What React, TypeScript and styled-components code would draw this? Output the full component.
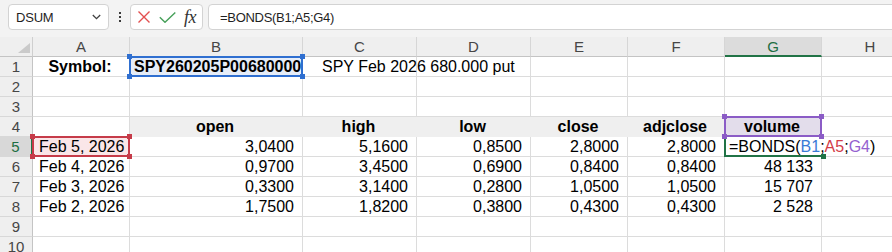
import React from "react";
import styled, { createGlobalStyle } from "styled-components";

const GlobalStyle = createGlobalStyle`
  html, body { margin: 0; padding: 0; background: #fff; }
  body { font-family: "Liberation Sans", Arial, sans-serif; overflow: hidden; }
  * { box-sizing: border-box; }
`;

const Window = styled.div`
  width: 892px;
  height: 252px;
  overflow: hidden;
  background: #fff;
`;

const Toolbar = styled.div`
  display: flex;
  align-items: flex-start;
  height: 37px;
  padding: 4px 0 0 8px;
  background: #f3f3f3;
`;

const Box = styled.div`
  height: 26px;
  background: #fff;
  border: 1px solid #d3d3d3;
  border-radius: 4px;
  display: flex;
  align-items: center;
`;

const NameBox = styled(Box)`
  width: 101px;
  justify-content: space-between;
  padding: 0 7px 0 7px;
  font-size: 13px;
  letter-spacing: -0.2px;
  color: #1f1f1f;
`;

const DotsHandle = styled.div`
  width: 21px;
  height: 26px;
  display: flex;
  flex-direction: column;
  align-items: center;
  justify-content: center;
  gap: 2px;
`;

const Dot = styled.span`
  width: 2px;
  height: 2px;
  background: #3a3a3a;
`;

const FxGroup = styled(Box)`
  width: 73px;
  padding-left: 6px;
  gap: 8px;
`;

const FxLabel = styled.span`
  font-family: "Liberation Serif", "DejaVu Serif", serif;
  font-style: italic;
  font-size: 18px;
  color: #333;
  line-height: 1;
  margin-left: 0px;
  letter-spacing: -0.5px;
`;

const FormulaBox = styled(Box)`
  flex: 1;
  margin-left: 5px;
  margin-right: -6px;
  padding-left: 11px;
  font-size: 13px;
  letter-spacing: -0.3px;
  color: #1f1f1f;
`;

const Sheet = styled.div`
  display: grid;
  grid-template-columns: 33px 97px 173px 114px 114px 97px 97px 97px 97px;
  grid-auto-rows: 20px;
  width: 919px;
`;

const Corner = styled.div`
  background: #efefef;
  border-right: 1px solid #cfcfcf;
  border-bottom: 1px solid #c4c4c4;
  display: flex;
  align-items: flex-end;
  justify-content: flex-end;
  padding: 0 2px 3px 0;
`;

const ColHeader = styled.div<{ $active?: boolean }>`
  background: ${(p) => (p.$active ? "#dcdcdc" : "#efefef")};
  border-right: 1px solid #d6d6d6;
  border-bottom: ${(p) => (p.$active ? "2px solid #217346" : "1px solid #c4c4c4")};
  color: ${(p) => (p.$active ? "#1c6e43" : "#464646")};
  font-size: 15px;
  line-height: 19px;
  text-align: center;
`;

const RowHeader = styled.div<{ $active?: boolean }>`
  background: ${(p) => (p.$active ? "#d8d8d8" : "#efefef")};
  border-right: ${(p) => (p.$active ? "2px solid #217346" : "1px solid #c4c4c4")};
  border-bottom: 1px solid #d8d8d8;
  color: ${(p) => (p.$active ? "#1c6e43" : "#464646")};
  font-size: 15px;
  line-height: 19px;
  text-align: center;
`;

type Align = "left" | "center" | "right";

const Cell = styled.div<{
  $align: Align;
  $bold?: boolean;
  $fill?: string;
  $indent?: number;
  $noRight?: boolean;
}>`
  position: relative;
  border-right: 1px solid
    ${(p) => (p.$noRight ? "transparent" : p.$fill ?? "#dcdcdc")};
  border-bottom: 1px solid ${(p) => p.$fill ?? "#dcdcdc"};
  background: ${(p) => p.$fill ?? "transparent"};
  font-size: 16px;
  line-height: 19px;
  color: #000;
  font-weight: ${(p) => (p.$bold ? 700 : 400)};
  text-align: ${(p) => p.$align};
  white-space: nowrap;
  padding: 0 8px 0 ${(p) => p.$indent ?? 6}px;
`;

const CellText = styled.span`
  position: relative;
  z-index: 3;
`;

const RefBox = styled.div<{ $color: string }>`
  position: absolute;
  left: -1px;
  top: -1px;
  right: -1px;
  bottom: -1px;
  border: 2px solid ${(p) => p.$color};
  pointer-events: none;
  z-index: 2;
`;

const ActiveBox = styled.div`
  position: absolute;
  left: -1px;
  top: -1px;
  right: -1px;
  bottom: -1px;
  border-left: 2px solid #217346;
  border-bottom: 2px solid #217346;
  pointer-events: none;
  z-index: 1;
`;

const Handle = styled.span<{ $color: string; $v: "top" | "bottom"; $h: "left" | "right" }>`
  position: absolute;
  width: 5px;
  height: 5px;
  background: ${(p) => p.$color};
  ${(p) => p.$v}: -4px;
  ${(p) => p.$h}: -4px;
`;

const Ref = styled.span<{ $color: string }>`
  color: ${(p) => p.$color};
`;

const BLUE = "#2f6fd0";
const RED = "#c63b49";
const PURPLE = "#8b5cc6";

const RefHighlight = ({ color }: { color: string }) => (
  <RefBox $color={color}>
    <Handle $color={color} $v="top" $h="left" />
    <Handle $color={color} $v="top" $h="right" />
    <Handle $color={color} $v="bottom" $h="left" />
    <Handle $color={color} $v="bottom" $h="right" />
  </RefBox>
);

interface CellDef {
  t?: React.ReactNode;
  a?: Align;
  b?: boolean;
  fill?: string;
  refColor?: string;
  indent?: number;
  active?: boolean;
}

const HEAD_FILL = "#efefef";

const formula = (
  <CellText>
    =BONDS(<Ref $color="#3b7bd6">B1</Ref>;<Ref $color="#d33c48">A5</Ref>;
    <Ref $color="#9461cf">G4</Ref>)
  </CellText>
);

const num = (t: string): CellDef => ({ t, a: "right" });
const date = (t: string): CellDef => ({ t, a: "left" });
const head = (t: string): CellDef => ({ t, a: "center", b: true, fill: HEAD_FILL });

const rows: CellDef[][] = [
  [
    { t: "Symbol:", a: "center", b: true },
    { t: "SPY260205P00680000", a: "left", b: true, fill: "#e6edf8", refColor: BLUE, indent: 4 },
    { t: "SPY Feb 2026 680.000 put", a: "left", indent: 19 },
    {}, {}, {}, {}, {},
  ],
  [{}, {}, {}, {}, {}, {}, {}, {}],
  [{}, {}, {}, {}, {}, {}, {}, {}],
  [
    {},
    head("open"),
    head("high"),
    head("low"),
    head("close"),
    head("adjclose"),
    { t: "volume", a: "center", b: true, fill: "#e3ddeb", refColor: PURPLE },
    {},
  ],
  [
    { t: "Feb 5, 2026", a: "left", fill: "#fae6e8", refColor: RED },
    num("3,0400"),
    num("5,1600"),
    num("0,8500"),
    num("2,8000"),
    num("2,8000"),
    { t: formula, a: "left", indent: 4, active: true },
    {},
  ],
  [date("Feb 4, 2026"), num("0,9700"), num("3,4500"), num("0,6900"), num("0,8400"), num("0,8400"), num("48 133"), {}],
  [date("Feb 3, 2026"), num("0,3300"), num("3,1400"), num("0,2800"), num("1,0500"), num("1,0500"), num("15 707"), {}],
  [date("Feb 2, 2026"), num("1,7500"), num("1,8200"), num("0,3800"), num("0,4300"), num("0,4300"), num("2 528"), {}],
  [{}, {}, {}, {}, {}, {}, {}, {}],
  [{}, {}, {}, {}, {}, {}, {}, {}],
];

const COLS = ["A", "B", "C", "D", "E", "F", "G", "H"];

const CloseIcon = () => (
  <svg width="14" height="12" viewBox="0 0 14 12">
    <path d="M1.5 0.5 L12.5 11.5 M12.5 0.5 L1.5 11.5" stroke="#e34f4f" strokeWidth="1.4" fill="none" />
  </svg>
);

const CheckIcon = () => (
  <svg width="17" height="11" viewBox="0 0 17 11">
    <path d="M0.8 5.3 L6 10.3 L16.3 0.5" stroke="#47a05a" strokeWidth="1.4" fill="none" />
  </svg>
);

const Chevron = () => (
  <svg width="9" height="6" viewBox="0 0 9 6">
    <path d="M0.8 1 L4.5 4.7 L8.2 1" stroke="#404040" strokeWidth="1.3" fill="none" />
  </svg>
);

const CornerTriangle = () => (
  <svg width="12" height="10" viewBox="0 0 12 10">
    <polygon points="12,0 12,10 0,10" fill="#cacaca" />
  </svg>
);

export default function App() {
  return (
    <Window>
      <GlobalStyle />
      <Toolbar>
        <NameBox>
          <span>DSUM</span>
          <Chevron />
        </NameBox>
        <DotsHandle>
          <Dot />
          <Dot />
          <Dot />
        </DotsHandle>
        <FxGroup>
          <CloseIcon />
          <CheckIcon />
          <FxLabel>fx</FxLabel>
        </FxGroup>
        <FormulaBox>=BONDS(B1;A5;G4)</FormulaBox>
      </Toolbar>
      <Sheet>
        <Corner>
          <CornerTriangle />
        </Corner>
        {COLS.map((c) => (
          <ColHeader key={c} $active={c === "G"}>
            {c}
          </ColHeader>
        ))}
        {rows.map((row, ri) => (
          <React.Fragment key={ri}>
            <RowHeader $active={ri === 4}>{ri + 1}</RowHeader>
            {row.map((cell, ci) => (
              <Cell
                key={ci}
                $align={cell.a ?? "left"}
                $bold={cell.b}
                $fill={cell.fill}
                $indent={cell.indent}
                $noRight={cell.active}
              >
                {cell.t}
                {cell.refColor && <RefHighlight color={cell.refColor} />}
                {cell.active && (
                  <ActiveBox>
                    <Handle $color="#217346" $v="bottom" $h="right" />
                  </ActiveBox>
                )}
              </Cell>
            ))}
          </React.Fragment>
        ))}
      </Sheet>
    </Window>
  );
}
